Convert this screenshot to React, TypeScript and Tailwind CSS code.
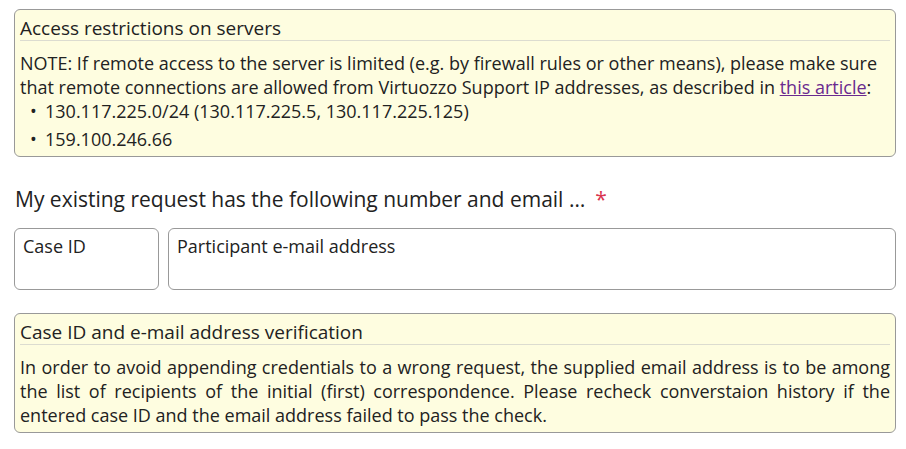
import React from 'react'

const Notice = ({ title, children }: { title: string; children: React.ReactNode }) => {
  return (
    <div className="rounded-[6px] border border-[#999999] bg-[#fefde0] px-[5px] pb-[5px]">
      <div className="border-b border-[#dcdcd0] pt-[6px] text-[19px] leading-[24px]">{title}</div>
      <div className="mt-[10px]">{children}</div>
    </div>
  )
}

const App = () => {
  return (
    <div
      className="w-[906px] h-[449px] bg-white pl-[14px] pr-[10px] pt-[9px] text-[18px] leading-[24px] text-[#222]"
      style={{ fontFamily: '"Open Sans", "Noto Sans", sans-serif' }}
    >
      <Notice title="Access restrictions on servers">
        <p>
          NOTE: If remote access to the server is limited (e.g. by firewall rules or other means), please make sure
          that remote connections are allowed from Virtuozzo Support IP addresses, as described in{' '}
          <a href="#" className="text-[#6a2a8f] underline">this article</a>:
        </p>
        <ul className="flex flex-col gap-[4px] pl-[10px]">
          <li className="flex">
            <span className="w-[15px]">•</span>
            <span>130.117.225.0/24 (130.117.225.5, 130.117.225.125)</span>
          </li>
          <li className="flex">
            <span className="w-[15px]">•</span>
            <span>159.100.246.66</span>
          </li>
        </ul>
      </Notice>

      {/* case lookup */}
      <div className="mt-[27px] text-[21px] leading-[30px] pl-[1px]">
        My existing request has the following number and email …
        <span className="ml-[10px] text-[#d9344f]">*</span>
      </div>

      <div className="mt-[14px] flex gap-[9px]">
        <textarea
          placeholder="Case ID"
          className="h-[62px] w-[145px] resize-none rounded-[6px] border border-[#999999] px-[8px] pt-[5px] outline-none placeholder:text-[#222]"
        />
        <textarea
          placeholder="Participant e-mail address"
          className="h-[62px] flex-1 resize-none rounded-[6px] border border-[#999999] px-[8px] pt-[5px] outline-none placeholder:text-[#222]"
        />
      </div>

      <div className="mt-[23px]">
        <Notice title="Case ID and e-mail address verification">
          <div>
            <span className="block whitespace-nowrap [text-align-last:justify]">
              In order to avoid appending credentials to a wrong request, the supplied email address is to be among
            </span>
            <span className="block whitespace-nowrap [text-align-last:justify]">
              the list of recipients of the initial (first) correspondence. Please recheck converstaion history if the
            </span>
            <span className="block whitespace-nowrap">
              entered case ID and the email address failed to pass the check.
            </span>
          </div>
        </Notice>
      </div>
    </div>
  )
}

export default App
